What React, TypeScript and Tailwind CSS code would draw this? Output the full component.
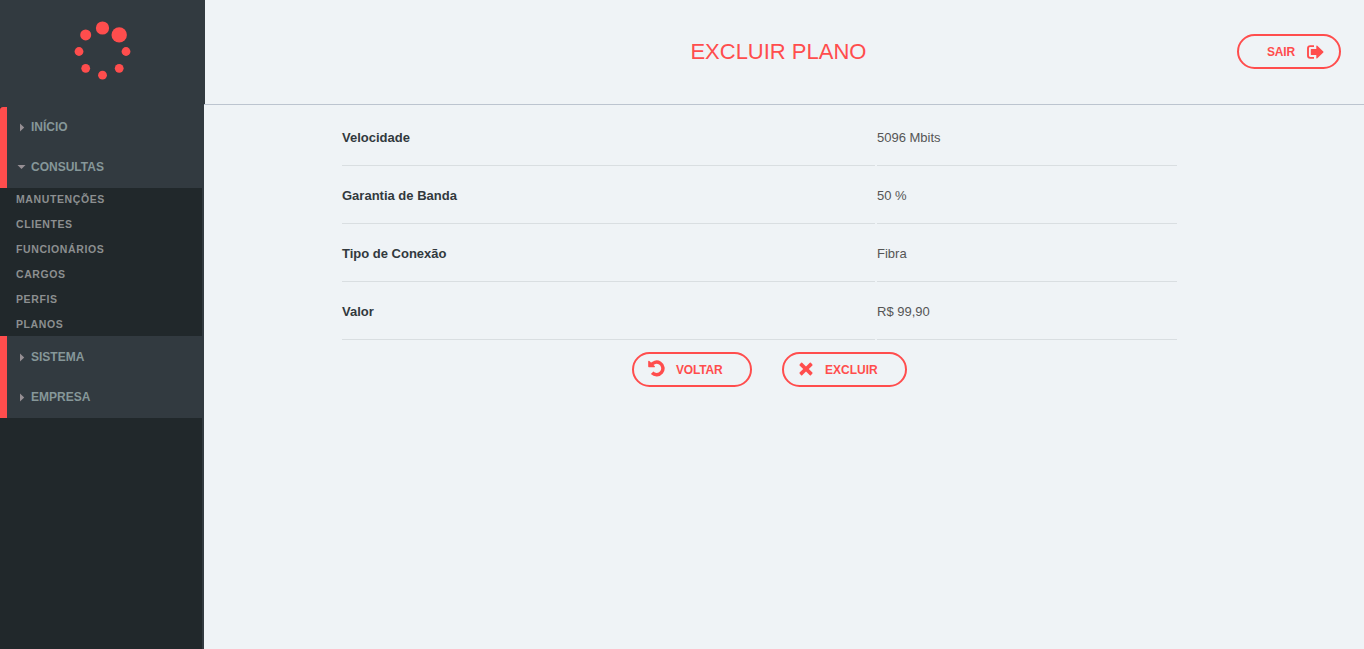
const DOTS: [number, number, number][] = [
  [102.5, 28, 6.6],
  [119.2, 34.9, 7.7],
  [126, 51.5, 4.4],
  [119.2, 68.3, 4.4],
  [102.5, 75.2, 4.4],
  [85.7, 68.3, 4.4],
  [79, 51.5, 4.4],
  [85.7, 34.9, 5.5],
];

const SUBITEMS = ['MANUTENÇÕES', 'CLIENTES', 'FUNCIONÁRIOS', 'CARGOS', 'PERFIS', 'PLANOS'];

const ROWS = [
  ['Velocidade', '5096 Mbits'],
  ['Garantia de Banda', '50 %'],
  ['Tipo de Conexão', 'Fibra'],
  ['Valor', 'R$ 99,90'],
];

function Logo() {
  return (
    <svg className="block h-[104px] w-[205px]" viewBox="0 0 205 104" fill="#ff4d4d">
      {DOTS.map(([cx, cy, r]) => (
        <circle key={`${cx}-${cy}`} cx={cx} cy={cy} r={r} />
      ))}
    </svg>
  );
}

function MenuItem({ label, open = false }: { label: string; open?: boolean }) {
  return (
    <div className="flex h-10 items-center pl-[10px] text-xs font-bold text-[#869799]">
      <svg className="mt-px mr-[5px] h-[9px] w-[9px]" viewBox="0 0 9 9" fill="#968f94">
        {open ? <path d="M0.5 2h8L4.5 6z" /> : <path d="M3 0.4v8.2L7.2 4.5z" />}
      </svg>
      {label}
    </div>
  );
}

function UndoIcon() {
  return (
    <svg className="mb-[2px] h-[17px] w-[17px]" viewBox="0 0 17 17" fill="none">
      <path d="M3 5.6A6.3 6.3 0 1 1 4.1 12.8" stroke="#ff4d4d" strokeWidth="3.5" />
      <path d="M0.2 1.3v5.2q0 .7.7.7h5.5q1-.2.4-1L1.4.9Q.4.4.2 1.3z" fill="#ff4d4d" />
    </svg>
  );
}

function TimesIcon() {
  return (
    <svg className="mb-px h-[14px] w-[14px]" viewBox="0 0 14 14" fill="#ff4d4d">
      <path d="M3.2.8 7 4.4 10.8.8q.6-.4 1.1 0l1.5 1.6q.4.5 0 1L9.8 7l3.6 3.6q.4.5 0 1l-1.5 1.6q-.5.4-1.1 0L7 9.6l-3.8 3.6q-.6.4-1.1 0L.6 11.6q-.4-.5 0-1L4.2 7 .6 3.4q-.4-.5 0-1L2.1.8q.5-.4 1.1 0z" />
    </svg>
  );
}

function SignOutIcon() {
  return (
    <svg className="h-[14px] w-[17px]" viewBox="0 0 17 14" fill="none">
      <path d="M7 1.1H3.2Q1 1.1 1 3.2v7.6q0 2.1 2.2 2.1H7" stroke="#ff4d4d" strokeWidth="1.9" />
      <path d="M4.2 4H9.3V1.1q.2-.9 1-.3L16.3 6.5q.4.5 0 1L10.3 13.2q-.8.6-1-.3V10H4.2q-.4 0-.4-.4V4.4q0-.4.4-.4z" fill="#ff4d4d" />
    </svg>
  );
}

export default function App() {
  return (
    <div className="flex h-[649px] w-[1364px] flex-col overflow-hidden bg-[#eff3f6] font-['Liberation_Sans',Arial,sans-serif]">
      <header className="flex h-[104px] shrink-0">
        <div className="w-[205px] bg-[#323a40]">
          <Logo />
        </div>
        <div className="grid flex-1 grid-cols-[1fr_auto_1fr] items-center pr-[23px]">
          <span className="w-[485.4px]" />
          <h1 className="text-[22px] leading-none text-[#ff4d4d]">EXCLUIR PLANO</h1>
          <button className="mb-px flex h-[35px] w-[104px] items-center justify-self-end rounded-[18px] border-2 border-[#ff4d4d] pl-7 text-xs font-bold text-[#ff4d4d]">
            <span className="w-10 text-left tracking-[-0.2px]">SAIR</span>
            <SignOutIcon />
          </button>
        </div>
      </header>
      <div className="flex min-h-0 flex-1">
        <nav className="flex w-[204px] flex-col border-r-2 border-[#323a40] bg-[#21282b]">
          <div className="h-[3px] bg-[#323a40]" />
          <div className="h-[81px] rounded-tl-[3px] border-l-[7px] border-[#ff4d4d] bg-[#323a40]">
            <MenuItem label="INÍCIO" />
            <MenuItem label="CONSULTAS" open />
          </div>
          <ul className="h-[148px] text-[10.5px] leading-[14px] font-bold tracking-[0.6px] text-[#8c8f90]">
            {SUBITEMS.map((item) => (
              <li key={item} className="flex h-[25px] items-center pb-1 pl-4">
                {item}
              </li>
            ))}
          </ul>
          <div className="h-[82px] border-l-[7px] border-[#ff4d4d] bg-[#323a40] pt-px">
            <MenuItem label="SISTEMA" />
            <MenuItem label="EMPRESA" />
          </div>
        </nav>
        <main className="flex-1 border-t border-[#bcc4cf]">
          <dl className="ml-[138px] w-[835px] pt-[3px] text-[13px] text-[#555]">
            {ROWS.map(([label, value]) => (
              <div key={label} className="grid h-[58px] grid-cols-[533px_300px] gap-x-[2px]">
                <dt className="flex items-center border-b border-[#d9dee1] pt-[2px] font-bold text-[#32393d]">{label}</dt>
                <dd className="flex items-center border-b border-[#d9dee1] pt-[2px]">{value}</dd>
              </div>
            ))}
          </dl>
          <div className="mt-3 ml-[428px] flex gap-[30px] text-xs font-bold text-[#ff4d4d]">
            <button className="flex h-[35px] w-[120px] items-center rounded-[18px] border-2 border-[#ff4d4d] pl-[14px]">
              <UndoIcon />
              <span className="ml-[11px] tracking-[-0.2px]">VOLTAR</span>
            </button>
            <button className="flex h-[35px] w-[125px] items-center rounded-[18px] border-2 border-[#ff4d4d] pl-[15px]">
              <TimesIcon />
              <span className="ml-3">EXCLUIR</span>
            </button>
          </div>
        </main>
      </div>
    </div>
  );
}
